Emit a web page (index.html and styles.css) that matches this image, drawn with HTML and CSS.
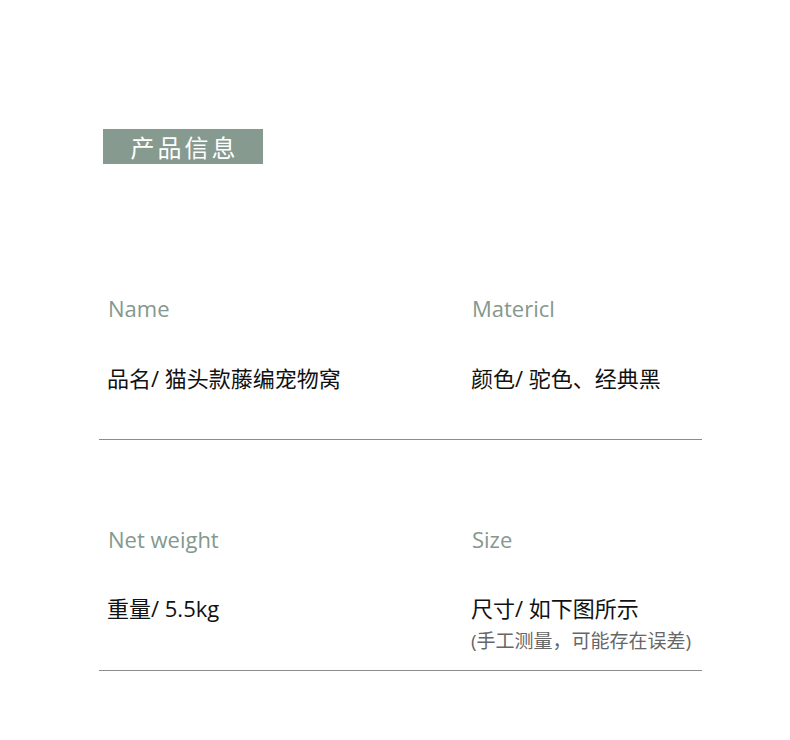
FILE: index.html
```html
<!DOCTYPE html>
<html lang="zh-CN">
<head>
  <meta charset="UTF-8" />
  <meta name="viewport" content="width=device-width, initial-scale=1.0">
  <title>产品信息</title>
  <link rel="stylesheet" href="styles.css">
</head>
<body>

  <div class="page">
    <!-- 标题 -->
    <div class="badge">产品信息</div>

    <div class="info-row first">
      <div class="cell">
        <div class="label">Name</div>
        <div class="value">品名/ 猫头款藤编宠物窝</div>
      </div>
      <div class="cell">
        <div class="label">Matericl</div>
        <div class="value">颜色/ 驼色、经典黑</div>
      </div>
    </div>

    <div class="info-row">
      <div class="cell">
        <div class="label">Net weight</div>
        <div class="value">重量/ 5.5kg</div>
      </div>
      <div class="cell">
        <div class="label">Size</div>
        <div class="value">尺寸/ 如下图所示</div>
        <div class="note">(手工测量，可能存在误差)</div>
      </div>
    </div>
  </div>

</body>
</html>
```

FILE: styles.css
```css
body {
  margin: 0;
  background: #fff;
  font-family: "Open Sans", "Noto Sans CJK SC", sans-serif;
  color: #111;
}
.page {
  width: 603px;
  margin-left: 99px;
  padding-top: 129px;
}
.badge {
  width: 160px;
  height: 35px;
  margin-left: 4px;
  background: #879a90;
  color: #fff;
  font-family: "Noto Sans CJK SC", sans-serif;
  font-size: 24px;
  letter-spacing: 3px;
  line-height: 35px;
  text-align: center;
  box-sizing: border-box;
  padding-left: 3px;
}
.info-row {
  display: grid;
  grid-template-columns: 364px 1fr;
  padding: 84px 8px 17px;
  border-bottom: 1px solid #8c8c8c;
}
.info-row.first {
  padding-top: 129px;
  padding-bottom: 46px;
}
.label {
  font-size: 22px;
  line-height: 30px;
  color: #84988e;
  padding-left: 1px;
}
.value {
  margin-top: 39px;
  font-size: 22px;
  line-height: 30px;
}
.first .value {
  margin-top: 40px;
}
.note {
  margin-top: 6px;
  font-size: 19px;
  line-height: 24px;
  color: #666;
}
```
